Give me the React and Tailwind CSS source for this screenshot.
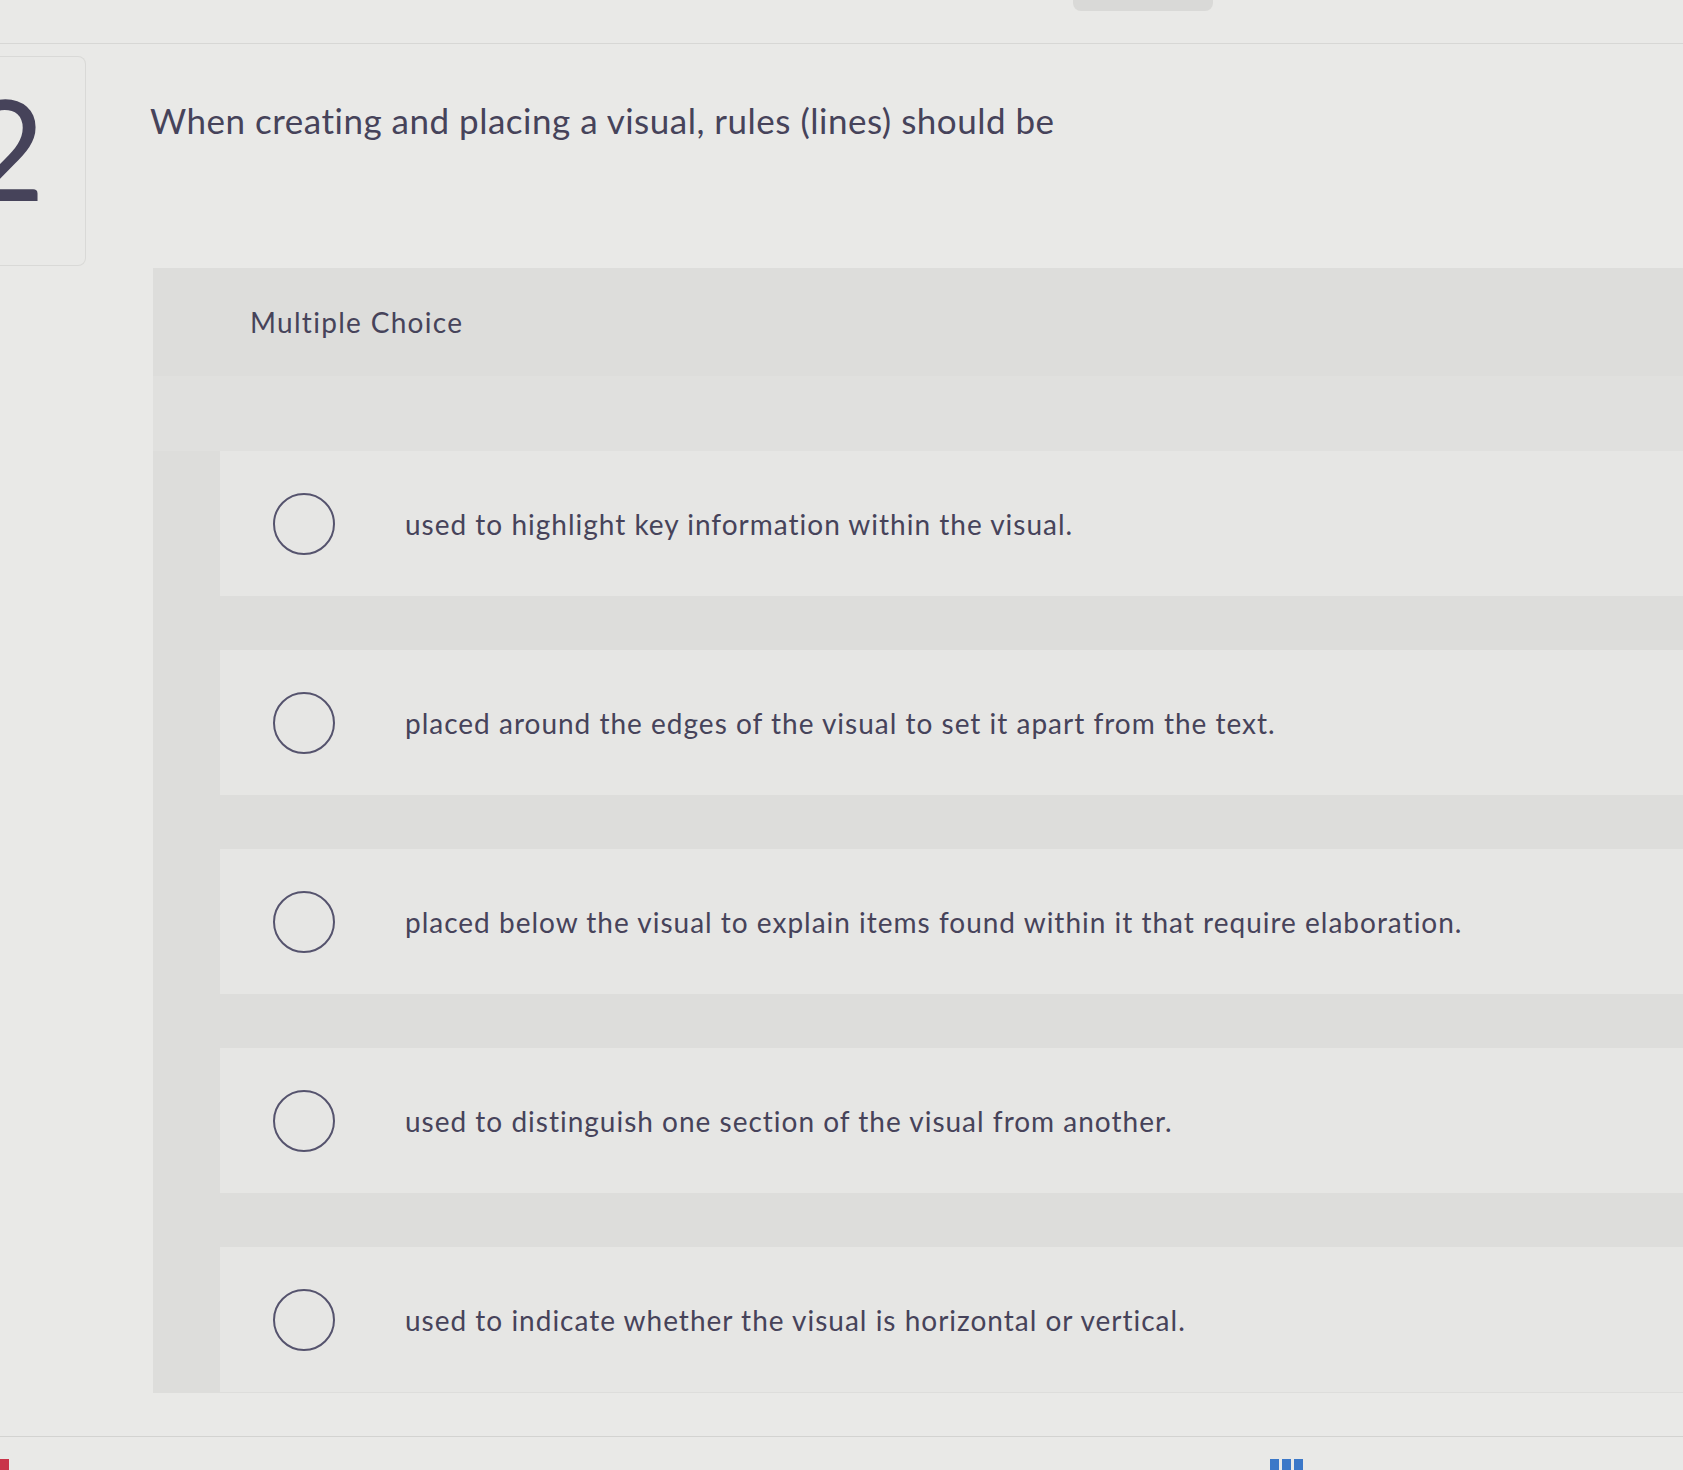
import React from 'react';

const options = [
    'used to highlight key information within the visual.',
    'placed around the edges of the visual to set it apart from the text.',
    'placed below the visual to explain items found within it that require elaboration.',
    'used to distinguish one section of the visual from another.',
    'used to indicate whether the visual is horizontal or vertical.',
];

const Option = ({ text }) => (
    <div className="flex items-center h-[145px] bg-[#e6e6e4] pl-[53px]">
        <span className="w-[62px] h-[62px] rounded-full border-2 border-[#55536d] shrink-0" />
        <span className="ml-[70px] text-[28px] tracking-[1px] text-[#46435a]">{text}</span>
    </div>
);

const App = () => {
    return (
        <div
            className="w-[1683px] h-[1470px] overflow-hidden bg-[#e9e9e7] flex flex-col"
            style={{ fontFamily: 'Lato, "Open Sans", sans-serif' }}
        >
            {/* top bar */}
            <div className="h-[44px] shrink-0 border-b border-[#d7d7d5] pl-[1073px]">
                <div className="w-[140px] h-[11px] bg-[#d9d9d7] rounded-b-lg" />
            </div>

            {/* question header */}
            <div className="flex h-[224px] shrink-0">
                <div className="w-[86px] h-[210px] mt-[12px] border border-l-0 border-[#d9d9d7] rounded-r-lg overflow-hidden flex items-start pt-[20px]">
                    <span className="-ml-[36px] text-[140px] leading-none text-[#46435a]">2</span>
                </div>
                <p className="ml-[64px] mt-[50px] text-[35px] tracking-[0.5px] text-[#46435a]">
                    When creating and placing a visual, rules (lines) should be
                </p>
            </div>

            {/* multiple choice panel */}
            <div className="ml-[153px] h-[1125px] shrink-0 bg-[#dddddb] flex flex-col">
                <div className="h-[108px] flex items-center pl-[97px] text-[28px] tracking-[1.3px] text-[#46435a]">
                    Multiple Choice
                </div>
                <div className="h-[75px] bg-[#e0e0de]" />
                <div className="pl-[67px] flex flex-col gap-[54px]">
                    {options.map((o) => (
                        <Option key={o} text={o} />
                    ))}
                </div>
            </div>

            {/* footer */}
            <div className="h-[43px] shrink-0" />
            <div className="border-t border-[#d3d3d1] flex-1 relative">
                <div className="absolute left-0 top-[22px] w-[9px] h-[12px] bg-[#c9344a]" />
                <div className="absolute left-[1270px] top-[22px] flex gap-[3px]">
                    <span className="w-[9px] h-[12px] bg-[#3b78c8]" />
                    <span className="w-[9px] h-[12px] bg-[#3b78c8]" />
                    <span className="w-[9px] h-[12px] bg-[#3b78c8]" />
                </div>
            </div>
        </div>
    );
};

export default App;
